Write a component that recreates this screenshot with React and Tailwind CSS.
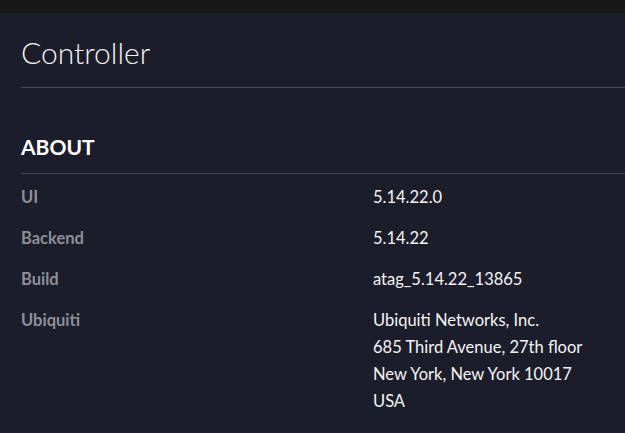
const rows = [
  { label: 'UI', value: ['5.14.22.0'] },
  { label: 'Backend', value: ['5.14.22'] },
  { label: 'Build', value: ['atag_5.14.22_13865'] },
  {
    label: 'Ubiquiti',
    value: [
      'Ubiquiti Networks, Inc.',
      '685 Third Avenue, 27th floor',
      'New York, New York 10017',
      'USA',
    ],
  },
];

const App = () => {
  return (
    <div className="min-h-[433px] w-full bg-[#1c1d2b] font-['Lato',sans-serif] overflow-hidden">
      <div className="h-[13px] bg-[#181818]" />
      <div className="pl-[21px]">
        <div className="pt-[19px] pb-[15px] border-b border-[#45475a]">
          <h1 className="text-[30px] leading-[40px] font-light text-[#f2f2f2]">Controller</h1>
        </div>
        <div className="pt-[47px] pb-[14px] border-b border-[#45475a]">
          <h2 className="text-[21px] leading-[24px] font-bold text-white">ABOUT</h2>
        </div>
        <div className="pt-[3px]">
          {rows.map((row) => (
            <div key={row.label} className="grid grid-cols-[352px_1fr] py-[7px] text-[16.5px] leading-[27px]">
              <div className="font-bold text-[#8d8f9a]">{row.label}</div>
              <div className="text-[#f4f4f4]">
                {row.value.map((line) => (
                  <div key={line}>{line}</div>
                ))}
              </div>
            </div>
          ))}
        </div>
      </div>
    </div>
  );
};

export default App;
